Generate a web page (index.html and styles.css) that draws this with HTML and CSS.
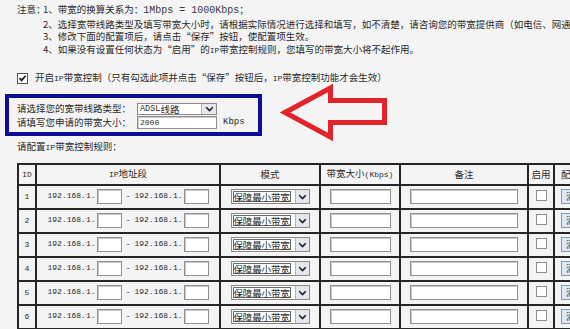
FILE: index.html
```html
<!DOCTYPE html>
<html lang="zh-CN">
<head>
<meta charset="utf-8">
<title>IP带宽控制</title>
<link rel="stylesheet" href="styles.css">
</head>
<body>
<div class="page">
  <div class="notes">
    <div class="note-label">注意：</div>
    <ul class="note-list">
      <li>1、带宽的换算关系为：<span class="en-l">1Mbps = 1000Kbps</span>；</li>
      <li>2、选择宽带线路类型及填写带宽大小时，请根据实际情况进行选择和填写，如不清楚，请咨询您的带宽提供商（如电信、网通等）。</li>
      <li>3、修改下面的配置项后，请点击“保存”按钮，使配置项生效。</li>
      <li>4、如果没有设置任何状态为“启用”的<span class="en">IP</span>带宽控制规则，您填写的带宽大小将不起作用。</li>
    </ul>
  </div>

  <div class="enable-row">
    <span class="check checked">
      <svg width="9" height="9" viewBox="0 0 9 9"><path d="M1.5 4.2 L3.6 6.4 L7.6 1.8" fill="none" stroke="#1a1a1a" stroke-width="1.7"/></svg>
    </span>
    <span>开启<span class="en">IP</span>带宽控制（只有勾选此项并点击“保存”按钮后，<span class="en">IP</span>带宽控制功能才会生效）</span>
  </div>

  <div class="line-box">
    <div class="field">
      <span class="field-label">请选择您的宽带线路类型：</span>
      <span class="select select-wide">
        <span class="select-text"><span class="en-m">ADSL</span>线路</span>
        <span class="select-btn"><svg width="9" height="6" viewBox="0 0 9 6"><path d="M1.2 1.2 L4.5 4.5 L7.8 1.2" fill="none" stroke="#1f1f1f" stroke-width="1.6"/></svg></span>
      </span>
    </div>
    <div class="field">
      <span class="field-label">请填写您申请的带宽大小：</span>
      <span class="textbox textbox-wide"><span class="en">2000</span></span>
      <span class="unit">Kbps</span>
    </div>
  </div>

  <div class="rules-title">请配置<span class="en">IP</span>带宽控制规则：</div>

  <table class="rules">
    <colgroup>
      <col class="c-id"><col class="c-ip"><col class="c-mode"><col class="c-bw"><col class="c-note"><col class="c-on"><col class="c-op">
    </colgroup>
    <thead>
      <tr>
        <th><span class="en">ID</span></th>
        <th><span class="en">IP</span>地址段</th>
        <th>模式</th>
        <th>带宽大小<span class="en">(Kbps)</span></th>
        <th>备注</th>
        <th>启用</th>
        <th class="op">配置</th>
      </tr>
    </thead>
    <tbody id="rows"></tbody>
  </table>
</div>

<svg class="arrow" width="570" height="329" viewBox="0 0 570 329">
  <polygon points="285,112.5 330.5,88 330.5,100.5 384.5,100.5 384.5,122.5 330.5,122.5 330.5,137" fill="none" stroke="#e1232b" stroke-width="5" stroke-linejoin="miter"/>
</svg>

<template id="row-tpl">
  <tr>
    <td class="id"><span class="en"></span></td>
    <td class="ip">
      <span class="en">192.168.1.</span><span class="textbox ip-box"></span><span class="dash">-</span><span class="en">192.168.1.</span><span class="textbox ip-box"></span>
    </td>
    <td>
      <span class="select select-mode">
        <span class="select-text"><span class="sel-focus">保障最小带宽</span></span>
        <span class="select-btn"><svg width="9" height="6" viewBox="0 0 9 6"><path d="M1.2 1.2 L4.5 4.5 L7.8 1.2" fill="none" stroke="#1f1f1f" stroke-width="1.6"/></svg></span>
      </span>
    </td>
    <td><span class="textbox bw-box"></span></td>
    <td><span class="textbox note-box"></span></td>
    <td><span class="check"></span></td>
    <td class="op"><span class="btn">清空</span></td>
  </tr>
</template>

<script>
  var tb = document.getElementById('rows');
  var tpl = document.getElementById('row-tpl');
  for (var i = 1; i <= 6; i++) {
    var r = tpl.content.cloneNode(true);
    r.querySelector('.id .en').textContent = i;
    tb.appendChild(r);
  }
</script>
</body>
</html>
```

FILE: styles.css
```css
html, body {
  margin: 0;
  padding: 0;
}
body {
  width: 570px;
  height: 329px;
  overflow: hidden;
  position: relative;
  background: #f4f4f4;
  color: #2a2a2a;
  font-family: "Noto Sans CJK SC", "Noto Sans", sans-serif;
  font-size: 9.5px;
  line-height: 12.5px;
}
.page {
  display: flex;
  flex-direction: column;
  align-items: flex-start;
}
.en {
  font-family: "Liberation Mono", monospace;
  font-size: 8px;
}
.en-l {
  font-family: "Liberation Mono", monospace;
  font-size: 10px;
  color: #3a3a3a;
}
.en-m {
  font-family: "Liberation Mono", monospace;
  font-size: 8.5px;
}

/* notes */
.notes {
  display: flex;
  padding: 3px 0 0 17px;
  white-space: nowrap;
}
.note-label {
  width: 26px;
}
.note-list {
  list-style: none;
  margin: 0;
  padding: 0;
}

/* enable row */
.enable-row {
  display: flex;
  align-items: center;
  gap: 7px;
  margin: 15px 0 0 17px;
  white-space: nowrap;
  height: 13px;
}
.check {
  display: inline-flex;
  align-items: center;
  justify-content: center;
  width: 11px;
  height: 11px;
  box-sizing: border-box;
  border: 1px solid #8c8c8c;
  background: #fff;
}
.check.checked {
  border-color: #555;
}

/* blue box */
.line-box {
  margin: 9px 0 0 5px;
  width: 257px;
  box-sizing: border-box;
  border: 4px solid #0d0d96;
  padding: 4px 0 3px 8px;
  display: flex;
  flex-direction: column;
  gap: 1px;
}
.field {
  display: flex;
  align-items: center;
  height: 13px;
  white-space: nowrap;
}
.field-label {
  width: 120px;
}
.unit {
  margin-left: 6px;
  font-family: "Liberation Mono", monospace;
  font-size: 9px;
}

/* selects */
.select {
  display: inline-flex;
  align-items: stretch;
  box-sizing: border-box;
  border: 1px solid #8a8a8a;
  background: #fff;
}
.select-text {
  flex: 1;
  min-width: 0;
  display: flex;
  align-items: center;
  padding-left: 2px;
  white-space: nowrap;
  line-height: 10px;
}
.select-btn {
  width: 14px;
  flex-shrink: 0;
  display: flex;
  align-items: center;
  justify-content: center;
  background: #e4e8ee;
  border-left: 1px solid #b5b5b5;
}
.select-wide {
  width: 80px;
  height: 12px;
}
.select-mode {
  width: 79px;
  height: 15px;
}
.select-mode .select-btn {
  width: 13px;
}
.select-mode .select-text {
  padding-left: 1px;
}
.sel-focus {
  border: 1px solid #6a6a6a;
  padding: 0;
  line-height: 10px;
  height: 11px;
  box-sizing: border-box;
  letter-spacing: -0.15px;
}

/* text boxes */
.textbox {
  display: inline-flex;
  align-items: center;
  box-sizing: border-box;
  background: #fff;
  border: 1px solid #8f8f8f;
  box-shadow: inset 1px 1px 0 #c8c8c8;
  vertical-align: middle;
  line-height: 10px;
}
.textbox-wide {
  width: 80px;
  height: 13px;
  padding-left: 2px;
}
.ip-box {
  width: 25px;
  height: 15px;
  margin-left: 1px;
}
.bw-box {
  width: 61px;
  height: 15px;
}
.note-box {
  width: 108px;
  height: 15px;
}

.rules-title {
  margin: 4px 0 0 17px;
  white-space: nowrap;
}

/* table */
.rules {
  margin: 8px 0 0 17px;
  border-collapse: collapse;
  table-layout: fixed;
  width: 596px;
  flex-shrink: 0;
}
.c-id { width: 18px; }
.c-ip { width: 184px; }
.c-mode { width: 100px; }
.c-bw { width: 80px; }
.c-note { width: 128px; }
.c-on { width: 26px; }
.c-op { width: 60px; }
.rules th,
.rules td {
  border: 2px solid #262626;
  padding: 0;
  text-align: center;
  vertical-align: middle;
  white-space: nowrap;
  font-weight: normal;
}
.rules thead tr {
  height: 21px;
}
.rules tbody tr {
  height: 24px;
}
.rules td.ip {
  font-size: 0;
}
.rules td.ip .en {
  font-size: 8px;
  vertical-align: middle;
}
.dash {
  display: inline-block;
  font-size: 9px;
  width: 13px;
  text-align: center;
  vertical-align: middle;
}
.rules td.op,
.rules th.op {
  text-align: left;
  padding-left: 6px;
}
.btn {
  display: inline-flex;
  align-items: center;
  padding: 0 4px;
  height: 15px;
  box-sizing: border-box;
  background: #dbe7f3;
  border: 1px solid #7d98b8;
}

.arrow {
  position: absolute;
  left: 0;
  top: 0;
  pointer-events: none;
}
```
